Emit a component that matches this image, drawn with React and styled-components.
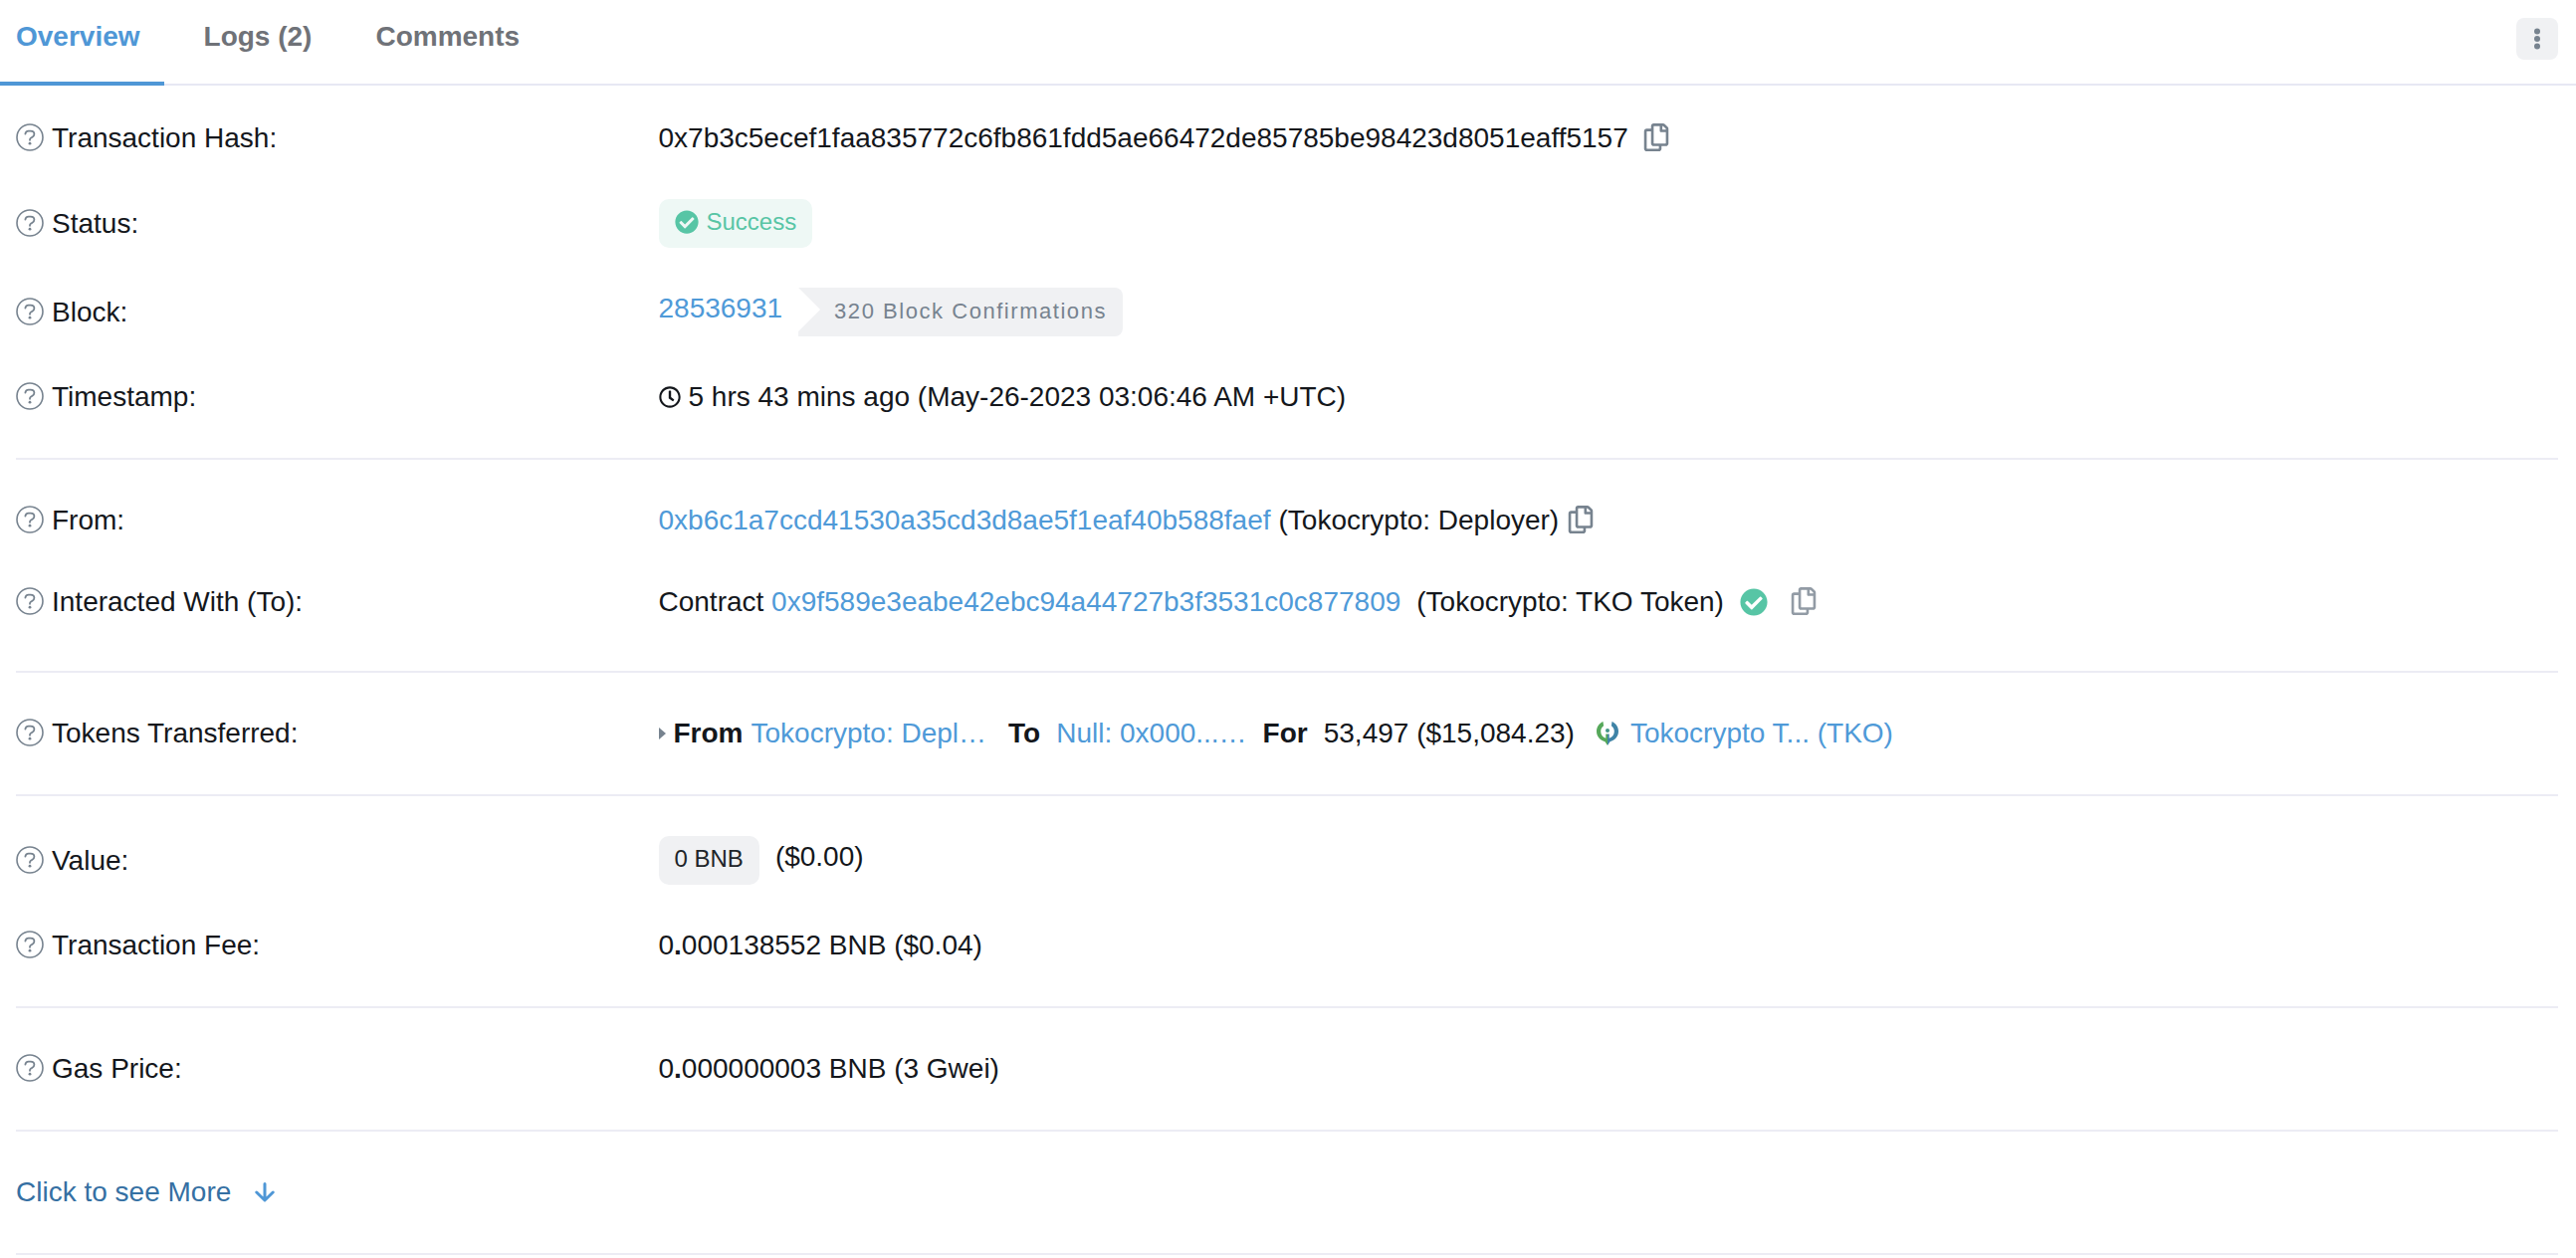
import React, { useState } from "react";
import styled, { createGlobalStyle } from "styled-components";
import { FaCheckCircle, FaRegClock, FaRegCopy } from "react-icons/fa";

const TABS = ["Overview", "Logs (2)", "Comments"];

function HelpIcon() {
  return (
    <STHelpIcon viewBox="0 0 28 28" aria-hidden="true">
      <circle cx="14" cy="14" r="13" strokeWidth="1.6" />
      <path
        d="M9.4 10.6c.2-1.8 1.500-3 3.300-3h2c2.100 0 3.700 1.400 3.700 3.200 0 1.300-.7 2.200-1.900 2.900l-1.300.8c-.8.5-1.200 1-1.200 1.800v.5"
        strokeWidth="1.8"
      />
      <circle cx="14" cy="20.2" r="1.4" fill="#77838f" stroke="none" />
    </STHelpIcon>
  );
}

function TokenLogo() {
  return (
    <STTokenLogo viewBox="0 0 22 24" aria-hidden="true">
      <path
        d="M6.500 0C2.500 1.800 0 5.500 0 9.800c0 5.400 3.700 9 8.500 10.500L11 24V12.500H9.300v4.300C6.200 15.700 4.200 13.200 4.200 10c0-2.300 1-4.400 2.900-5.800z"
        fill="#56a85a"
      />
      <path
        d="M15.500 0C19.500 1.800 22 5.500 22 9.800c0 5.400-3.700 9-8.500 10.500L11 24V12.500h1.700v4.300c3.100-1.100 5.100-3.600 5.100-6.800 0-2.300-1-4.400-2.900-5.800z"
        fill="#3f83a6"
      />
      <circle cx="11" cy="9" r="2" fill="#45958a" />
    </STTokenLogo>
  );
}

function CopyButton({ label }) {
  return (
    <STCopyButton type="button" aria-label={label}>
      <FaRegCopy size={28} />
    </STCopyButton>
  );
}

function InfoRow({ label, children }) {
  return (
    <STRow>
      <STLabel>
        <HelpIcon />
        {label}
      </STLabel>
      <STValue>{children}</STValue>
    </STRow>
  );
}

function App() {
  const [activeTab, setActiveTab] = useState("Overview");

  return (
    <>
      <GlobalStyle />
      <STHeader>
        <STTabs>
          {TABS.map((tab) => (
            <STTab
              key={tab}
              type="button"
              $active={tab === activeTab}
              onClick={() => setActiveTab(tab)}
            >
              {tab}
            </STTab>
          ))}
        </STTabs>
        <STMenuButton type="button" aria-label="More options">
          <svg width="6" height="22" viewBox="0 0 6 22" fill="currentColor">
            <circle cx="3" cy="3.5" r="3" />
            <circle cx="3" cy="11" r="3" />
            <circle cx="3" cy="18.5" r="3" />
          </svg>
        </STMenuButton>
      </STHeader>

      <STMain>
        <STSection>
          <InfoRow label="Transaction Hash:">
            <STInline $gap={14}>
              <span>
                0x7b3c5ecef1faa835772c6fb861fdd5ae66472de85785be98423d8051eaff5157
              </span>
              <CopyButton label="Copy hash" />
            </STInline>
          </InfoRow>
          <InfoRow label="Status:">
            <STStatusBadge>
              <FaCheckCircle size={24} />
              Success
            </STStatusBadge>
          </InfoRow>
          <InfoRow label="Block:">
            <STLink href="#block">28536931</STLink>
            <STConfirmations>320 Block Confirmations</STConfirmations>
          </InfoRow>
          <InfoRow label="Timestamp:">
            <STInline $gap={8}>
              <FaRegClock size={22} />
              <span>5 hrs 43 mins ago (May-26-2023 03:06:46 AM +UTC)</span>
            </STInline>
          </InfoRow>
        </STSection>

        <STSection $roomy>
          <InfoRow label="From:">
            <STInline $gap={8}>
              <STLink href="#from">
                0xb6c1a7ccd41530a35cd3d8ae5f1eaf40b588faef
              </STLink>
              <span>(Tokocrypto: Deployer)</span>
              <CopyButton label="Copy sender" />
            </STInline>
          </InfoRow>
          <InfoRow label="Interacted With (To):">
            <STInline $gap={16}>
              <span>
                Contract{" "}
                <STLink href="#to">
                  0x9f589e3eabe42ebc94a44727b3f3531c0c877809
                </STLink>
              </span>
              <span>(Tokocrypto: TKO Token)</span>
              <STVerified>
                <FaCheckCircle size={28} />
              </STVerified>
              <STMuted>
                <CopyButton label="Copy contract" />
              </STMuted>
            </STInline>
          </InfoRow>
        </STSection>

        <STSection>
          <InfoRow label="Tokens Transferred:">
            <STTransfer>
              <STInline $gap={8}>
                <STCaret viewBox="0 0 7 12" aria-hidden="true">
                  <path d="M0 0l7 6-7 6z" />
                </STCaret>
                <b>From</b>
                <STLink href="#sender">Tokocrypto: Depl…</STLink>
              </STInline>
              <STInline $gap={16}>
                <b>To</b>
                <STLink href="#receiver">Null: 0x000...…</STLink>
                <b>For</b>
                <span>53,497 ($15,084.23)</span>
              </STInline>
              <STInline $gap={12}>
                <TokenLogo />
                <STLink href="#token">Tokocrypto T... (TKO)</STLink>
              </STInline>
            </STTransfer>
          </InfoRow>
        </STSection>

        <STSection>
          <InfoRow label="Value:">
            <STAmountBadge>0 BNB</STAmountBadge>
            <span>($0.00)</span>
          </InfoRow>
          <InfoRow label="Transaction Fee:">
            <span>
              0<b>.</b>000138552 BNB ($0.04)
            </span>
          </InfoRow>
        </STSection>

        <STSection>
          <InfoRow label="Gas Price:">
            <span>
              0<b>.</b>000000003 BNB (3 Gwei)
            </span>
          </InfoRow>
        </STSection>

        <STSection>
          <STMoreLink href="#more">
            Click to see More
            <STArrow viewBox="0 0 20 20" aria-hidden="true">
              <path d="M10 1.5v16M1.800 10l8.200 8 8.200-8" />
            </STArrow>
          </STMoreLink>
        </STSection>
      </STMain>
    </>
  );
}

export default App;

const GlobalStyle = createGlobalStyle`
  * {
    box-sizing: border-box;
  }

  body {
    margin: 0;
    background-color: #ffffff;
    color: #14171c;
    font-family: "Liberation Sans", Arial, sans-serif;
    font-size: 28px;
    line-height: 42px;
  }

  button {
    border: none;
    padding: 0;
    background: none;
    font: inherit;
    cursor: pointer;
  }

  svg {
    flex-shrink: 0;
  }
`;

const STHeader = styled.header`
  display: flex;
  justify-content: space-between;
  align-items: flex-start;
  border-bottom: 2px solid #e7e8f3;
  padding-right: 18px;
`;

const STTabs = styled.nav`
  display: flex;
  gap: 16px;
  margin-bottom: -2px;
`;

const STTab = styled.button`
  && {
    padding: 16px 24px 24px;
    border-bottom: 4px solid
      ${({ $active }) => ($active ? "#4f97d6" : "transparent")};
    color: ${({ $active }) => ($active ? "#4f97d6" : "#6f7278")};
    font-weight: bold;
  }

  &&:first-child {
    padding-left: 16px;
  }
`;

const STMenuButton = styled.button`
  && {
    display: flex;
    justify-content: center;
    align-items: center;
    width: 42px;
    height: 42px;
    margin-top: 18px;
    border-radius: 8px;
    background-color: #f0f1f3;
    color: #77838f;
  }
`;

const STMain = styled.main`
  padding: 32px 18px 0 16px;
`;

const STSection = styled.section`
  display: flex;
  flex-direction: column;
  gap: 40px;
  padding-bottom: ${({ $roomy }) => ($roomy ? 48 : 40)}px;
  margin-bottom: 40px;
  border-bottom: 2px solid #ececf4;

  &:last-child {
    margin-bottom: 0;
  }
`;

const STRow = styled.div`
  display: grid;
  grid-template-columns: 25% 1fr;
  column-gap: 7px;
  align-items: center;
`;

const STLabel = styled.div`
  white-space: nowrap;
`;

const STHelpIcon = styled.svg`
  width: 28px;
  height: 28px;
  margin-right: 8px;
  vertical-align: -4px;
  fill: none;
  stroke: #77838f;
  stroke-linecap: round;
`;

const STValue = styled.div`
  display: flex;
  flex-wrap: wrap;
  align-items: flex-start;
  column-gap: 16px;
  min-width: 0;
  overflow-wrap: anywhere;
`;

const STInline = styled.div`
  display: flex;
  align-items: center;
  gap: ${({ $gap }) => $gap}px;
`;

const STTransfer = styled.div`
  display: flex;
  flex-wrap: wrap;
  column-gap: 22px;
`;

const STLink = styled.a`
  color: #4f9ad8;
  text-decoration: none;
`;

const STCopyButton = styled.button`
  && {
    display: flex;
    padding-bottom: 2px;
    color: #77838f;
  }
`;

const STMuted = styled.span`
  margin-left: 6px;
  opacity: 0.8;
`;

const STVerified = styled.span`
  display: flex;
  color: #57c5a5;
`;

const STBadge = styled.span`
  display: flex;
  padding: 5px 16px 8px;
  border-radius: 10px;
  font-size: 24px;
  line-height: 36px;
`;

const STStatusBadge = styled(STBadge)`
  align-items: center;
  gap: 8px;
  background-color: #eef8f5;
  color: #57c5a5;
`;

const STAmountBadge = styled(STBadge)`
  background-color: #f0f1f3;
  color: #212529;
`;

const STConfirmations = styled(STBadge)`
  padding: 6px 16px 7px 36px;
  border-radius: 0 8px 8px 0;
  background-color: #f0f1f3;
  color: #77838f;
  font-size: 22px;
  letter-spacing: 0.07em;
  clip-path: polygon(0 0, 100% 0, 100% 100%, 0 100%, 0 44px, 22px 22px);
`;

const STCaret = styled.svg`
  width: 7px;
  height: 12px;
  fill: #77838f;
`;

const STTokenLogo = styled.svg`
  width: 22px;
  height: 24px;
`;

const STMoreLink = styled.a`
  display: flex;
  align-items: center;
  gap: 24px;
  color: #3570a3;
  text-decoration: none;
`;

const STArrow = styled.svg`
  width: 20px;
  height: 20px;
  fill: none;
  stroke: #4f97d6;
  stroke-width: 3;
  stroke-linecap: round;
  stroke-linejoin: round;
`;
